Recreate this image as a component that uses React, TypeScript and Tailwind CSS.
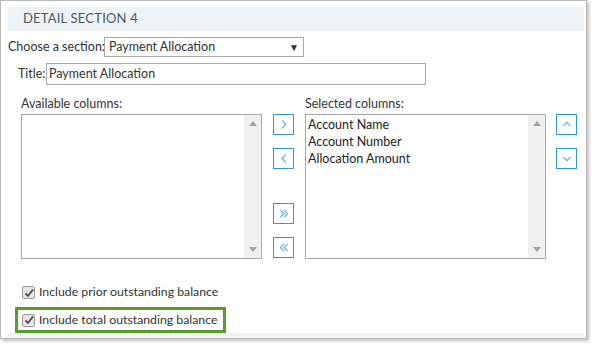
import React from 'react';

const font = { fontFamily: 'Lato, "Open Sans", sans-serif' };

function ArrowButton({ kind }: { kind: 'right' | 'left' | 'dright' | 'dleft' | 'up' | 'down' }) {
  const paths: Record<string, string> = {
    right: 'M8 6 L12 10.5 L8 15',
    left: 'M12 6 L8 10.5 L12 15',
    dright: 'M6 6.5 L10 10.5 L6 14.5 M10 6.5 L14 10.5 L10 14.5',
    dleft: 'M10 6.5 L6 10.5 L10 14.5 M14 6.5 L10 10.5 L14 14.5',
    up: 'M6 12 L10 8 L14 12',
    down: 'M6 9 L10 13 L14 9',
  };
  return (
    <button className="w-[21px] h-[21px] border border-[#2e9ad5] bg-white flex items-center justify-center p-0">
      <svg width="19" height="19" viewBox="0 0 19 21">
        <path d={paths[kind]} fill="none" stroke="#5aaee6" strokeWidth="1.3" />
      </svg>
    </button>
  );
}

function ListBox({ items }: { items: string[] }) {
  return (
    <div className="w-[241px] h-[145px] border border-[#a9a9a9] bg-white flex">
      <div className="flex-1 pl-[2px] pt-[1px] text-[12.5px] leading-[17px] text-[#222]">
        {items.map((i) => (
          <div key={i}>{i}</div>
        ))}
      </div>
      <div className="w-[17px] bg-[#f0f0f0] flex flex-col justify-between items-center py-[6px]">
        <svg width="8" height="5" viewBox="0 0 8 5"><path d="M0 5 L4 0 L8 5 Z" fill="#a3a3a3" /></svg>
        <svg width="8" height="5" viewBox="0 0 8 5"><path d="M0 0 L4 5 L8 0 Z" fill="#a3a3a3" /></svg>
      </div>
    </div>
  );
}

function Check({ label }: { label: string }) {
  return (
    <label className="flex items-center gap-[4px] text-[12.3px] text-[#333] whitespace-nowrap">
      <span className="w-[13px] h-[13px] border border-[#9a9a9a] bg-[#e6e6e6] rounded-[2px] flex items-center justify-center">
        <svg width="10" height="10" viewBox="0 0 10 10">
          <path d="M1.5 5.5 L4 8 L9 1.5" fill="none" stroke="#4a4a4a" strokeWidth="1.8" />
        </svg>
      </span>
      {label}
    </label>
  );
}

export default function App() {
  return (
    <div className="w-[596px] h-[348px] bg-white" style={font}>
      <div className="w-[587px] h-[339px] border border-[#b9b9b9] bg-white shadow-[2px_2px_3px_rgba(0,0,0,0.25)] pl-[7px] pr-[2px] pt-[6px] flex flex-col">
        <div className="h-[27px] bg-[#eff3f6] pl-[15px] flex items-center text-[13px] text-[#4c5866] tracking-[0.2px]">
          DETAIL SECTION 4
        </div>

        <div className="flex items-center mt-[6px] h-[20px] text-[12.5px] text-[#333] whitespace-nowrap">
          <span className="w-[96px] shrink-0">Choose a section:</span>
          <div className="w-[200px] h-[20px] border border-[#a9a9a9] flex items-center justify-between pl-[4px] pr-[4px]">
            <span>Payment Allocation</span>
            <span className="text-[10px] text-[#333]">▼</span>
          </div>
        </div>

        <div className="flex items-center mt-[6px] h-[22px] pl-[10px] text-[12.5px] text-[#333] whitespace-nowrap">
          <span className="w-[28px] shrink-0">Title:</span>
          <div className="w-[380px] h-[22px] border border-[#a9a9a9] flex items-center pl-[2px]">
            Payment Allocation
          </div>
        </div>

        <div className="flex mt-[10px] pl-[13px]">
          <div className="flex flex-col">
            <span className="text-[12.5px] text-[#333] h-[19px]">Available columns:</span>
            <ListBox items={[]} />
          </div>
          <div className="flex flex-col ml-[11px] pt-[19px]">
            <ArrowButton kind="right" />
            <div className="mt-[13px]"><ArrowButton kind="left" /></div>
            <div className="mt-[34px]"><ArrowButton kind="dright" /></div>
            <div className="mt-[13px]"><ArrowButton kind="dleft" /></div>
          </div>
          <div className="flex flex-col ml-[11px]">
            <span className="text-[12.5px] text-[#333] h-[19px]">Selected columns:</span>
            <ListBox items={['Account Name', 'Account Number', 'Allocation Amount']} />
          </div>
          <div className="flex flex-col ml-[10px] pt-[19px]">
            <ArrowButton kind="up" />
            <div className="mt-[13px]"><ArrowButton kind="down" /></div>
          </div>
        </div>

        <div className="mt-[24px] pl-[14px]">
          <Check label="Include prior outstanding balance" />
        </div>
        <div className="mt-[5px] ml-[7px] w-[211px] h-[29px] border-[3px] border-[#5b9b2c] flex items-center pl-[4px]">
          <Check label="Include total outstanding balance" />
        </div>
        <div className="h-[5px] bg-[#eff3f6]" />
      </div>
    </div>
  );
}
